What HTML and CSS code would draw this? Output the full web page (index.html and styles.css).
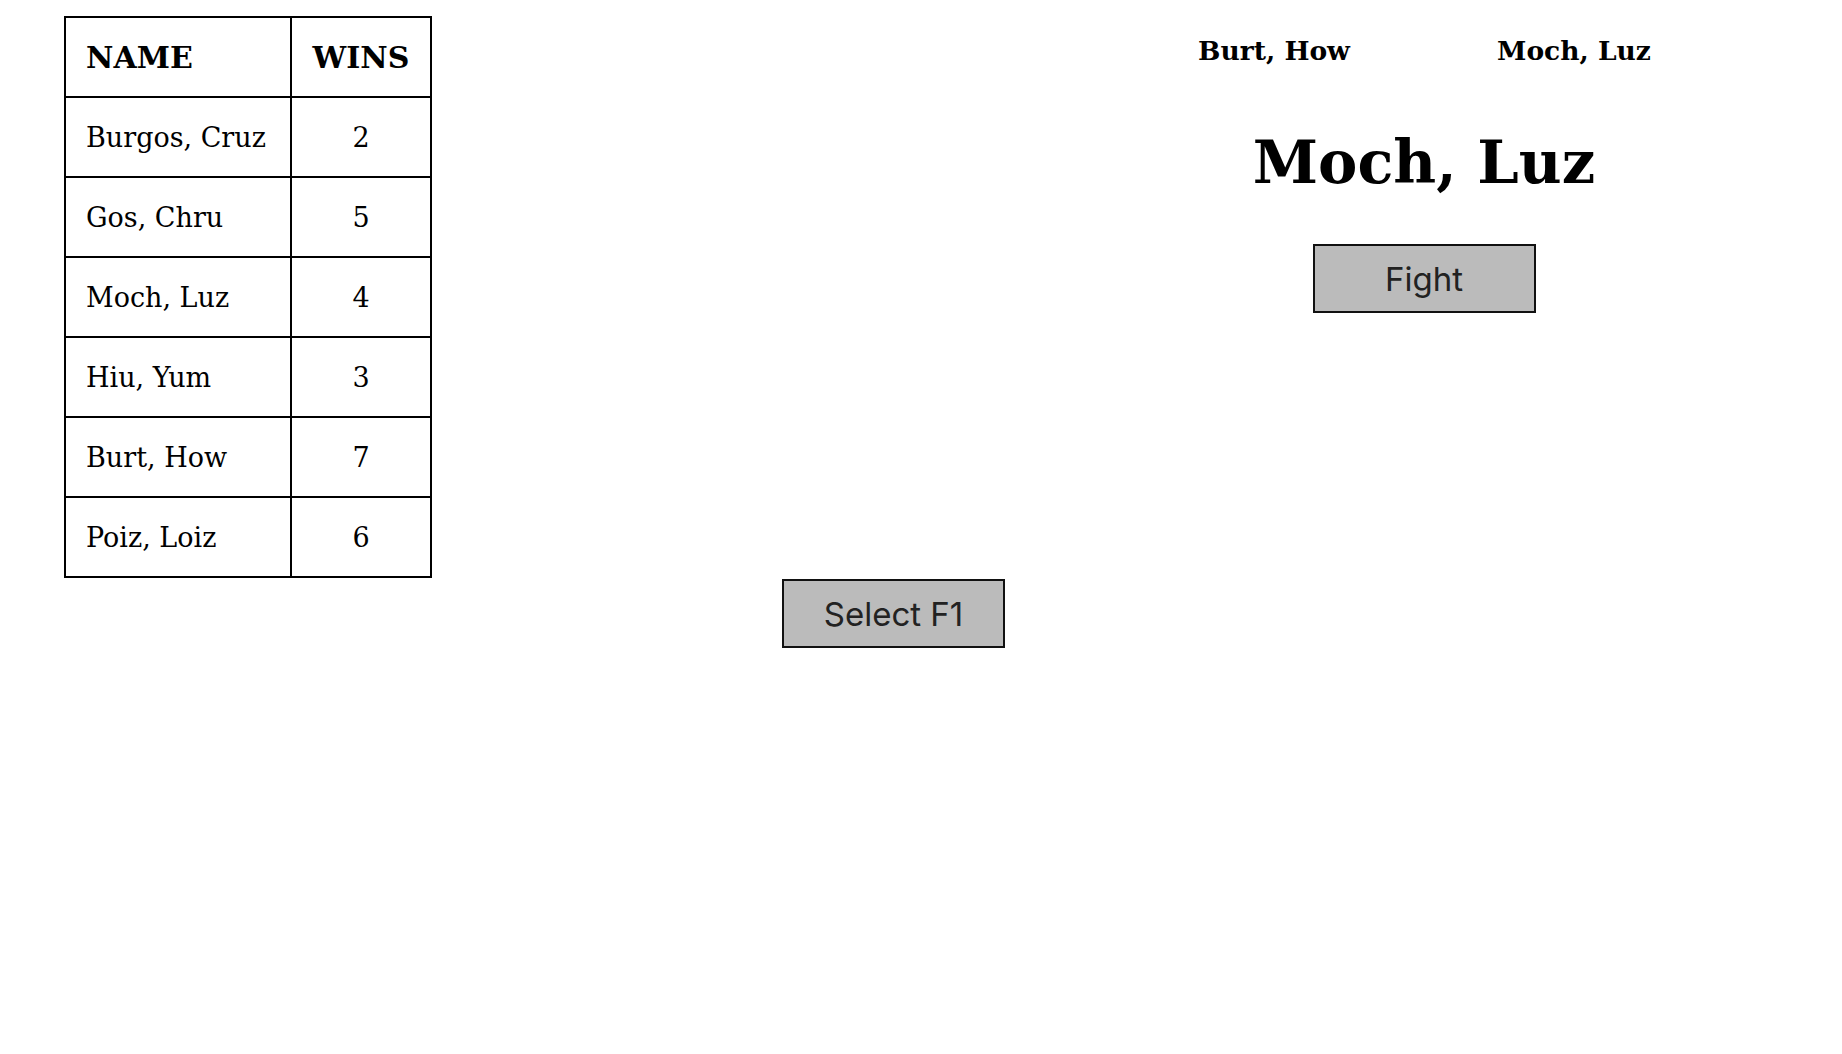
FILE: index.html
```html
<!DOCTYPE html>
<html>
<head>
<meta charset="utf-8">
<title>Fight</title>
<link rel="stylesheet" href="styles.css">
</head>
<body>
<div class="top">
  <table class="scores">
    <tr><th class="name">NAME</th><th class="wins">WINS</th></tr>
    <tr><td class="name">Burgos, Cruz</td><td class="wins">2</td></tr>
    <tr><td class="name">Gos, Chru</td><td class="wins">5</td></tr>
    <tr><td class="name">Moch, Luz</td><td class="wins">4</td></tr>
    <tr><td class="name">Hiu, Yum</td><td class="wins">3</td></tr>
    <tr><td class="name">Burt, How</td><td class="wins">7</td></tr>
    <tr><td class="name">Poiz, Loiz</td><td class="wins">6</td></tr>
  </table>
  <section class="arena">
    <div class="fighters">
      <div class="fighter">Burt, How</div>
      <div class="fighter">Moch, Luz</div>
    </div>
    <h1 class="winner">Moch, Luz</h1>
    <button class="btn btn-fight">Fight</button>
  </section>
</div>
<div class="select-row">
  <button class="btn btn-select">Select F1</button>
</div>
</body>
</html>
```

FILE: styles.css
```css
html, body {
  margin: 0;
  padding: 0;
  background: #fff;
}
body {
  font-family: "DejaVu Serif", "Liberation Serif", serif;
  color: #000;
}
.top {
  display: flex;
  align-items: flex-start;
  padding-top: 16px;
  padding-left: 64px;
}
.scores {
  border-collapse: collapse;
  border: 2px solid #000;
  table-layout: fixed;
  width: 368px;
}
.scores th, .scores td {
  border: 2px solid #000;
  height: 78px;
  padding: 0 0 0 20px;
  font-size: 27px;
  vertical-align: middle;
}
.scores th {
  font-weight: bold;
  text-align: left;
  font-size: 30px;
}
.scores .name { width: 204px; }
.scores .wins { text-align: center; padding: 0; }
.scores th.wins { text-align: center; }
.arena {
  margin-left: auto;
  width: 836px;
  display: flex;
  flex-direction: column;
  align-items: center;
}
.fighters {
  display: grid;
  grid-template-columns: 300px 300px;
  justify-content: center;
  margin-top: 20px;
}
.fighter {
  text-align: center;
  font-weight: bold;
  font-size: 26.5px;
  line-height: 30px;
}
.winner {
  margin: 61px 0 0 0;
  font-size: 59px;
  line-height: 72px;
  font-weight: bold;
}
.btn {
  font-family: Inter, "Liberation Sans", sans-serif;
  font-size: 33px;
  color: #222;
  background: #bbbbbb;
  border: 2px solid #111;
  border-radius: 0;
  padding: 0;
  width: 223px;
  height: 69px;
}
.btn-fight {
  margin-top: 45px;
}
.select-row {
  padding-left: 782px;
  padding-top: 1px;
}
```
